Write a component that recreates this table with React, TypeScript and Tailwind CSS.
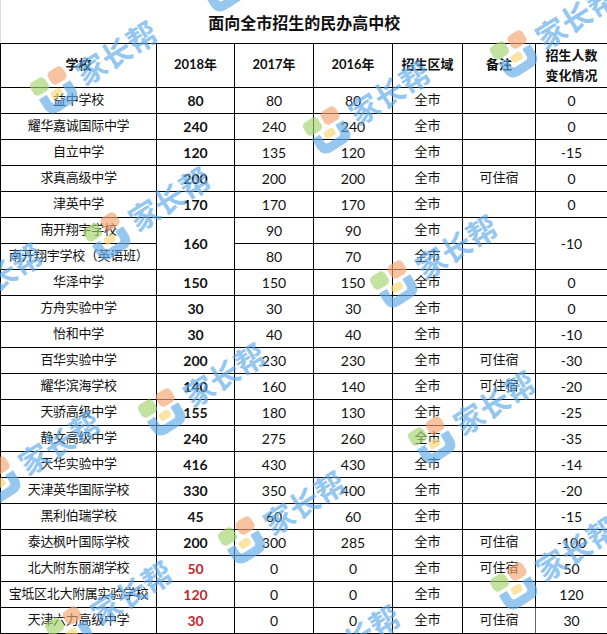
import React from 'react';

type Row = {
  name: string;
  y18?: string;
  y17: string;
  y16: string;
  area: string;
  note: string;
  diff?: string;
  red?: boolean;
  span?: boolean;
};

const rows: Row[] = [
  { name: '益中学校', y18: '80', y17: '80', y16: '80', area: '全市', note: '', diff: '0' },
  { name: '耀华嘉诚国际中学', y18: '240', y17: '240', y16: '240', area: '全市', note: '', diff: '0' },
  { name: '自立中学', y18: '120', y17: '135', y16: '120', area: '全市', note: '', diff: '-15' },
  { name: '求真高级中学', y18: '200', y17: '200', y16: '200', area: '全市', note: '可住宿', diff: '0' },
  { name: '津英中学', y18: '170', y17: '170', y16: '170', area: '全市', note: '', diff: '0' },
  { name: '南开翔宇学校', y18: '160', y17: '90', y16: '90', area: '全市', note: '', diff: '-10', span: true },
  { name: '南开翔宇学校（英语班）', y17: '80', y16: '70', area: '全市', note: '' },
  { name: '华泽中学', y18: '150', y17: '150', y16: '150', area: '全市', note: '', diff: '0' },
  { name: '方舟实验中学', y18: '30', y17: '30', y16: '30', area: '全市', note: '', diff: '0' },
  { name: '怡和中学', y18: '30', y17: '40', y16: '40', area: '全市', note: '', diff: '-10' },
  { name: '百华实验中学', y18: '200', y17: '230', y16: '230', area: '全市', note: '可住宿', diff: '-30' },
  { name: '耀华滨海学校', y18: '140', y17: '160', y16: '140', area: '全市', note: '可住宿', diff: '-20' },
  { name: '天骄高级中学', y18: '155', y17: '180', y16: '130', area: '全市', note: '', diff: '-25' },
  { name: '静文高级中学', y18: '240', y17: '275', y16: '260', area: '全市', note: '', diff: '-35' },
  { name: '天华实验中学', y18: '416', y17: '430', y16: '430', area: '全市', note: '', diff: '-14' },
  { name: '天津英华国际学校', y18: '330', y17: '350', y16: '400', area: '全市', note: '', diff: '-20' },
  { name: '黑利伯瑞学校', y18: '45', y17: '60', y16: '60', area: '全市', note: '', diff: '-15' },
  { name: '泰达枫叶国际学校', y18: '200', y17: '300', y16: '285', area: '全市', note: '可住宿', diff: '-100' },
  { name: '北大附东丽湖学校', y18: '50', y17: '0', y16: '0', area: '全市', note: '可住宿', diff: '50', red: true },
  { name: '宝坻区北大附属实验学校', y18: '120', y17: '0', y16: '0', area: '全市', note: '', diff: '120', red: true },
  { name: '天津六力高级中学', y18: '30', y17: '0', y16: '0', area: '全市', note: '可住宿', diff: '30', red: true },
];

// watermark centres, picked off the screenshot
const marks: [number, number][] = [
  [95, 66], [555, 30], [368, 106], [148, 212], [-20, 288], [435, 260],
  [203, 388], [473, 416], [38, 456], [283, 516], [555, 562], [110, 606], [338, 650], [262, -36],
];

const Logo: React.FC = () => (
  <svg width="46" height="46" viewBox="0 0 40 40" className="shrink-0">
    <rect x="3" y="3" width="15" height="13" rx="4" fill="#a3d46c" />
    <rect x="21" y="3" width="15" height="13" rx="4" fill="#f5a470" />
    <path d="M4 19 L4 27 Q4 37 14 37 L26 37 Q36 37 36 27 L36 19 L28 19 L28 26 Q28 29 25 29 L15 29 Q12 29 12 26 L12 19 Z" fill="#5eaae8" />
    <rect x="15" y="19" width="10" height="7" rx="2" fill="#f7d774" />
  </svg>
);

const Watermark: React.FC<{ x: number; y: number }> = ({ x, y }) => (
  <div
    className="absolute flex w-max whitespace-nowrap items-center gap-1 -translate-x-1/2 -translate-y-1/2 -rotate-[32deg] opacity-65 pointer-events-none"
    style={{ left: x, top: y }}
  >
    <Logo />
    <span className="text-[30px] font-bold text-[#5aa8ea] leading-none">家长帮</span>
  </div>
);

const td = 'border border-black text-center p-0';

const App: React.FC = () => {
  return (
    <div className="relative w-[607px] h-[634px] overflow-hidden bg-white text-[#111] font-['Lato','Noto_Sans_CJK_SC',sans-serif]">
      <table className="table-fixed border-collapse w-[607px]">
        <colgroup>
          <col className="w-[156px]" />
          <col className="w-[78px]" />
          <col className="w-[79px]" />
          <col className="w-[79px]" />
          <col className="w-[70px]" />
          <col className="w-[73px]" />
          <col className="w-[72px]" />
        </colgroup>
        <tbody>
          <tr className="h-[43px]">
            <td colSpan={7} className="border-l border-l-[#dcdcdc] border-b border-b-black text-center text-[16px] font-bold pt-1">
              面向全市招生的民办高中校
            </td>
          </tr>
          <tr className="h-[44px] text-[13px] font-bold">
            <td className={td}>学校</td>
            <td className={td}>2018年</td>
            <td className={td}>2017年</td>
            <td className={td}>2016年</td>
            <td className={td}>招生区域</td>
            <td className={td}>备注</td>
            <td className={`${td} leading-[20px]`}>
              招生人数
              <br />
              变化情况
            </td>
          </tr>
          {rows.map((r, i) => {
            const last = i === rows.length - 1;
            return (
              <tr key={r.name} className="h-[26px] text-[13px]">
                <td className={`${td} whitespace-nowrap tracking-[-0.3px]`}>{r.name}</td>
                {r.y18 !== undefined && (
                  <td
                    rowSpan={r.span ? 2 : 1}
                    className={`${td} text-[14px] font-bold ${r.red ? 'text-[#c0282d]' : ''}`}
                  >
                    {r.y18}
                  </td>
                )}
                <td className={`${td} text-[14px]`}>{r.y17}</td>
                <td className={`${td} text-[14px]`}>{r.y16}</td>
                <td className={td}>{r.area}</td>
                <td className={`${td} ${last ? 'border-r-dashed border-r-[#666]' : ''}`}>{r.note}</td>
                {r.diff !== undefined && (
                  <td rowSpan={r.span ? 2 : 1} className={`${td} text-[14px]`}>
                    {r.diff}
                  </td>
                )}
              </tr>
            );
          })}
        </tbody>
      </table>
      {marks.map(([x, y], i) => (
        <Watermark key={i} x={x} y={y} />
      ))}
    </div>
  );
};

export default App;
